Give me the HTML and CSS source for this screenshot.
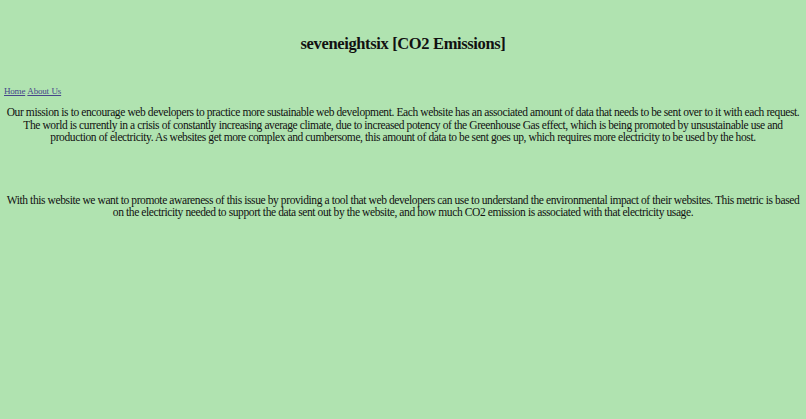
FILE: index.html
```html
<!DOCTYPE html>
<html>
<head>
<meta charset="utf-8">
<link rel="stylesheet" href="styles.css">
</head>
<body>
<header class="header">
<h1 class="title">seveneightsix [CO2 Emissions]</h1>
</header>
<nav class="nav"><a href="#" class="link">Home</a> <a href="#" class="link">About Us</a></nav>
<main class="content">
<p class="para first">Our mission is to encourage web developers to practice more sustainable web development. Each website has an associated amount of data that needs to be sent over to it with each request. The world is currently in a crisis of constantly increasing average climate, due to increased potency of the Greenhouse Gas effect, which is being promoted by unsustainable use and production of electricity. As websites get more complex and cumbersome, this amount of data to be sent goes up, which requires more electricity to be used by the host.</p>
<p class="para second">With this website we want to promote awareness of this issue by providing a tool that web developers can use to understand the environmental impact of their websites. This metric is based on the electricity needed to support the data sent out by the website, and how much CO2 emission is associated with that electricity usage.</p>
</main>
</body>
</html>
```
FILE: styles.css
```css
html { background: #b0e3b0; }
body {
  margin: 0;
  padding: 0 4px;
  font-family: "Liberation Serif", "Times New Roman", serif;
  color: #111;
}
.header { padding-top: 33px; }
.title {
  margin: 0;
  text-align: center;
  font-size: 16.5px;
  letter-spacing: -0.36px;
  line-height: 22px;
  font-weight: bold;
}
.nav {
  margin-top: 30px;
  font-size: 9px;
  letter-spacing: -0.2px;
  word-spacing: 0.6px;
  line-height: 12px;
}
.link { color: #46468a; }
.para {
  margin: 0;
  text-align: center;
  font-size: 11.5px;
  letter-spacing: -0.4px;
  line-height: 12.5px;
}
.first { margin-top: 9px; }
.second { margin-top: 50px; }
```
